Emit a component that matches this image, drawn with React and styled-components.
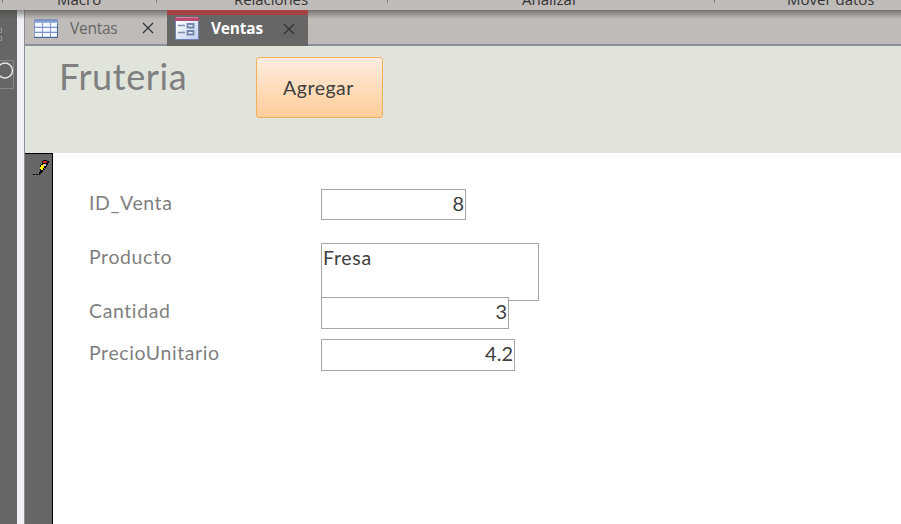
import React from "react";
import styled, { createGlobalStyle } from "styled-components";

const Global = createGlobalStyle`
  * { box-sizing: border-box; }
  body { margin: 0; overflow: hidden; background: #fff; }
`;

const Window = styled.div`
  display: flex;
  flex-direction: column;
  width: 901px;
  height: 524px;
  overflow: hidden;
  font-family: "Open Sans", "Noto Sans", sans-serif;
`;

const Ribbon = styled.div`
  display: flex;
  flex: 0 0 10px;
  overflow: hidden;
  padding-left: 2px;
  background: #bfbbb8;
`;

const RibbonGroup = styled.div`
  flex: 0 0 ${(p) => p.$width}px;
  height: 3px;
  border-left: 1px solid #85827f;
  padding-left: ${(p) => p.$indent}px;
  font-size: 15px;
  line-height: 20px;
  letter-spacing: ${(p) => p.$track}px;
  color: #333;
  white-space: nowrap;
`;

const GroupName = styled.span`
  display: block;
  margin-top: -12px;
  padding-top: 0.5px;
`;

const Workspace = styled.div`
  position: relative;
  display: flex;
  flex: 1;
  min-height: 0;
`;

const RibbonShadow = styled.div`
  position: absolute;
  inset: 0 0 auto 0;
  height: 9px;
  background: linear-gradient(rgba(65, 65, 60, 0.58), rgba(70, 70, 65, 0));
  pointer-events: none;
`;

const NavPane = styled.aside`
  flex: 0 0 17px;
  overflow: hidden;
  background: #666;
`;

const Splitter = styled.div`
  flex: 0 0 8px;
  background: #eef0f3;
  border-right: 1px solid #8b8f96;
`;

const Documents = styled.main`
  display: flex;
  flex-direction: column;
  flex: 1;
  min-width: 0;
`;

const TabBar = styled.div`
  display: flex;
  flex: 0 0 36px;
  height: 36px;
  background: #bfbbb8;
  border-bottom: 2px solid #8a909a;
`;

const Tab = styled.div`
  display: flex;
  align-items: center;
  flex: 0 0 ${(p) => (p.$active ? 141 : 142)}px;
  height: ${(p) => (p.$active ? 36 : 34)}px;
  margin-bottom: ${(p) => (p.$active ? -2 : 0)}px;
  padding: ${(p) => (p.$active ? "0 0 4px 8px" : "2px 0 0 9px")};
  background: ${(p) => (p.$active ? "#666" : "transparent")};
  border-top: ${(p) => (p.$active ? "5px solid #a34145" : "0")};
  color: ${(p) => (p.$active ? "#fff" : "#666")};
  font-size: ${(p) => (p.$active ? 15.4 : 15.5)}px;
  font-weight: ${(p) => (p.$active ? 700 : 400)};
  z-index: ${(p) => (p.$active ? 1 : "auto")};
`;

const TabTitle = styled.span`
  flex: 0 0 72px;
  margin-left: 12px;
  line-height: 20px;
  letter-spacing: ${(p) => (p.$active ? -0.15 : -0.25)}px;
`;

const FormHeader = styled.header`
  display: flex;
  align-items: flex-start;
  flex: 0 0 107px;
  padding: 11px 0 0 34px;
  background: #e0e4db;
  font-family: Lato, sans-serif;
`;

const Title = styled.h1`
  flex: 0 0 197px;
  margin: -1px 0 0;
  font-size: 36px;
  font-weight: 400;
  line-height: 40px;
  letter-spacing: 0.6px;
  color: #7f7f7f;
`;

const AddButton = styled.button`
  width: 127px;
  height: 61px;
  padding: 0 2px 1px 0;
  border: 1px solid #f3b05e;
  border-radius: 3px;
  background: linear-gradient(#ffede0, #ffcd99);
  color: #404040;
  font: 19.5px Lato, sans-serif;
  letter-spacing: 0.5px;
`;

const FormBody = styled.section`
  display: flex;
  flex: 1;
  background: #fff;
`;

const RecordSelector = styled.div`
  flex: 0 0 28px;
  background: #666;
  border-top: 1px solid #000;
  border-right: 1px solid #000;
  padding: 6px 0 0 8px;
`;

const Fields = styled.div`
  display: grid;
  grid-template-columns: 232px auto;
  grid-template-rows: 54px 54px 42px 42px;
  align-content: start;
  align-items: start;
  padding: 36px 0 0 36px;
  font-family: Lato, sans-serif;
  font-size: 19.5px;
`;

const Label = styled.label`
  padding-top: 2px;
  line-height: 24px;
  letter-spacing: 0.6px;
  color: #7f7f7f;
`;

const Value = styled.div`
  width: ${(p) => p.$width}px;
  height: ${(p) => p.$height}px;
  padding: 1px 1px;
  border: 1px solid #a6a6a6;
  background: #fff;
  color: #404040;
  font-size: ${(p) => (p.$text ? 19.5 : 20)}px;
  line-height: 25px;
  letter-spacing: ${(p) => (p.$text ? 0.7 : 0)}px;
  text-align: ${(p) => (p.$text ? "left" : "right")};
`;

const Svg = styled.svg`
  display: block;
  flex: none;
`;

function TableIcon() {
  return (
    <Svg width="24" height="19" viewBox="0 0 24 19" shapeRendering="crispEdges">
      <defs>
        <linearGradient id="tableHead" x2="0" y2="1">
          <stop stopColor="#7089c0" /><stop offset="1" stopColor="#a5bae2" />
        </linearGradient>
      </defs>
      <rect width="24" height="19" fill="#7f95c5" />
      <rect x="1" y="1" width="22" height="3" fill="url(#tableHead)" />
      {[4, 9, 14].map((y) => [1, 9, 17].map((x) => (
        <g key={`${x}-${y}`}>
          <rect x={x} y={y} width={x === 17 ? 6 : 7} height="4" fill="#cddcf5" />
          <rect x={x} y={y} width={x === 17 ? 6 : 7} height="3" fill="#f3f7ff" />
        </g>
      )))}
      <path d="M0 18.5h24M23.5 5v13" stroke="#4b6491" />
    </Svg>
  );
}

function FormIcon() {
  return (
    <Svg width="24" height="23" viewBox="0 0 24 23">
      <defs>
        <linearGradient id="formPaper" x2="1" y2="1">
          <stop stopColor="#fff" /><stop offset="1" stopColor="#bfcdec" />
        </linearGradient>
      </defs>
      <path d="M0 0h24v23H0z" fill="#6f84b0" />
      <path d="M0 0h24v4H0z" fill="#b74a73" />
      <path d="M1 0h22v1H1z" fill="#d984a2" />
      <path d="M1 4h22v18H1z" fill="url(#formPaper)" />
      <path d="M3 8.5h7M3 15.500h7" stroke="#7c8db0" strokeWidth="1.6" />
      <path d="M12.500 7h6v3.500h-6zM12.500 14h6v3.500h-6z" fill="#e9f0ff" stroke="#7284aa" strokeWidth="1.8" />
    </Svg>
  );
}

function CloseIcon({ color }) {
  return (
    <Svg width="12" height="12" viewBox="0 0 12 12">
      <path d="M1 1l10 10M11 1L1 11" stroke={color} strokeWidth="1.2" />
    </Svg>
  );
}

function NavIcons() {
  return (
    <Svg width="17" height="90" viewBox="0 10 17 90" fill="none">
      <path d="M0 28.5h1.5v4H0M0 36.5h1.5v4H0" stroke="#9292a0" />
      <path d="M0 60.5h13.5v28H0" stroke="#888" />
      <circle cx="5" cy="70.5" r="7.5" stroke="#e4e4e4" strokeWidth="1.5" />
    </Svg>
  );
}

const PENCIL = [
  "..........kkkk..",
  ".........krrrrkk",
  ".........krrrrkk",
  ".........kkkkkk.",
  "........kkywwkk.",
  ".......kyywwwk..",
  ".......kyyykkk..",
  ".......yyyykk...",
  ".......yyyk.....",
  ".......kyykk....",
  ".......kkk......",
  ".......kkk......",
  "......kkk.......",
  "......kk........",
];

const PENCIL_COLORS = { k: "#000", r: "#d42a10", y: "#fff200", w: "#d8d8d8" };

function PencilIcon() {
  return (
    <Svg width="17" height="15" viewBox="0 0 17 15" shapeRendering="crispEdges">
      {PENCIL.flatMap((row, y) => [...row].map((c, x) =>
        c === "." ? null : (
          <rect key={`${x}-${y}`} x={x} y={y} width="1" height="1" fill={PENCIL_COLORS[c]} />
        )
      ))}
      <path d="M0 14.5h2M3 14.5h2M6 14.5h1" stroke="#000" />
    </Svg>
  );
}

const groups = [
  { name: "Macro", width: 154, indent: 54, track: 0 },
  { name: "Relaciones", width: 231, indent: 77, track: -0.05 },
  { name: "Analizar", width: 327, indent: 134, track: 0 },
  { name: "Mover datos", width: 187, indent: 72, track: 0 },
];

const records = [
  { name: "ID_Venta", value: "8", width: 145, height: 31 },
  { name: "Producto", value: "Fresa", width: 218, height: 58, text: true },
  { name: "Cantidad", value: "3", width: 188, height: 32 },
  { name: "PrecioUnitario", value: "4.2", width: 194, height: 32 },
];

export default function App() {
  return (
    <>
      <Global />
      <Window>
        <Ribbon>
          {groups.map((g) => (
            <RibbonGroup key={g.name} $width={g.width} $indent={g.indent} $track={g.track}>
              <GroupName>{g.name}</GroupName>
            </RibbonGroup>
          ))}
        </Ribbon>
        <Workspace>
          <NavPane><NavIcons /></NavPane>
          <Splitter />
          <Documents>
            <TabBar>
              <Tab>
                <TableIcon />
                <TabTitle>Ventas</TabTitle>
                <CloseIcon color="#333" />
              </Tab>
              <Tab $active>
                <FormIcon />
                <TabTitle $active>Ventas</TabTitle>
                <CloseIcon color="#303030" />
              </Tab>
            </TabBar>
            <FormHeader>
              <Title>Fruteria</Title>
              <AddButton>Agregar</AddButton>
            </FormHeader>
            <FormBody>
              <RecordSelector><PencilIcon /></RecordSelector>
              <Fields>
                {records.map((r) => (
                  <React.Fragment key={r.name}>
                    <Label>{r.name}</Label>
                    <Value $width={r.width} $height={r.height} $text={r.text}>{r.value}</Value>
                  </React.Fragment>
                ))}
              </Fields>
            </FormBody>
          </Documents>
          <RibbonShadow />
        </Workspace>
      </Window>
    </>
  );
}
